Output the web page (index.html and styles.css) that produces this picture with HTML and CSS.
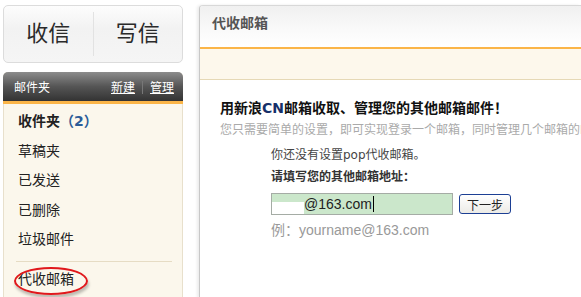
FILE: index.html
```html
<!DOCTYPE html>
<html lang="zh-CN">
<head>
    <meta charset="UTF-8">
    <title>代收邮箱</title>
    <link rel="stylesheet" href="styles.css">
</head>
<body>
    <div class="side">
        <div class="quick">
            <a class="quick-btn" href="#">收信</a>
            <a class="quick-btn" href="#">写信</a>
        </div>
        <div class="folders">
            <div class="folders-head">
                <span>邮件夹</span>
                <span class="ops"><a href="#">新建</a><i class="sep"></i><a href="#">管理</a></span>
            </div>
            <ul class="folder-list">
                <li class="bold">收件夹<span class="count">（2）</span></li>
                <li>草稿夹</li>
                <li>已发送</li>
                <li>已删除</li>
                <li>垃圾邮件</li>
            </ul>
            <div class="divider"></div>
            <ul class="folder-list">
                <li class="marked">代收邮箱</li>
            </ul>
        </div>
    </div>

    <div class="main">
        <div class="main-head">代收邮箱</div>
        <div class="main-bar"></div>
        <div class="main-body">
            <h2 class="title">用新浪<span class="cn">CN</span>邮箱收取、管理您的其他邮箱邮件！</h2>
            <p class="intro">您只需要简单的设置，即可实现登录一个邮箱，同时管理几个邮箱的邮件。</p>
            <div class="form">
                <p class="note">你还没有设置pop代收邮箱。</p>
                <p class="label">请填写您的其他邮箱地址：</p>
                <div class="row">
                    <div class="input"><span class="mask"></span>@163.com<span class="caret"></span></div>
                    <button class="button" type="button">下一步</button>
                </div>
                <p class="hint">例：yourname@163.com</p>
            </div>
        </div>
    </div>
</body>
</html>
```

FILE: styles.css
```css
body {
    margin: 0;
    font-family: "DejaVu Sans", "Noto Sans CJK SC", sans-serif;
    background: #fff;
    color: #333;
    display: flex;
    align-items: flex-start;
    overflow: hidden;
    height: 297px;
}
.side {
    flex: 0 0 180px;
    margin: 5px 0 0 3px;
}
.quick {
    height: 56px;
    display: flex;
    align-items: center;
    border: 1px solid #dcdcdc;
    border-radius: 5px;
    background: linear-gradient(to bottom, #fdfdfd, #f2f2f2 40%, #f5f5f5);
}
.quick-btn {
    flex: 1;
    text-align: center;
    font-size: 22px;
    color: #2a2a2a;
    text-decoration: none;
    line-height: 44px;
}
.quick-btn + .quick-btn {
    border-left: 1px solid #e2e2e2;
}
.folders {
    margin-top: 9px;
    height: 230px;
    background: #fbf7ec;
    border: 1px solid #e8e0cc;
    border-top: none;
    border-radius: 5px 5px 0 0;
}
.folders-head {
    height: 29px;
    display: flex;
    justify-content: space-between;
    align-items: center;
    padding: 0 9px 0 11px;
    font-size: 12px;
    color: #fff;
    border-radius: 5px 5px 0 0;
    background: linear-gradient(to bottom, #8c8c8c, #555 50%, #333);
    border-bottom: 3px solid #fbb548;
    margin: 0 -1px;
}
.ops a {
    color: #fff;
    text-decoration: underline;
}
.sep {
    display: inline-block;
    width: 1px;
    height: 13px;
    background: #777;
    margin: 0 7px;
    vertical-align: -2px;
}
.folder-list {
    list-style: none;
    margin: 0;
    padding: 3px 0 0 14px;
}
.folder-list li {
    font-size: 14px;
    line-height: 29.5px;
    color: #222;
}
.folder-list .bold {
    font-weight: bold;
}
.count {
    color: #2b5c98;
}
.divider {
    height: 1px;
    background: #e6dcc4;
    margin: 6px 10px 0 12px;
}
.folder-list .marked {
    position: relative;
    display: inline-block;
}
.marked::after {
    content: "";
    position: absolute;
    left: -4px;
    top: 2px;
    width: 70px;
    height: 24px;
    border: 2px solid #e0181c;
    border-radius: 50%;
    box-shadow: 1px 3px 3px rgba(0, 0, 0, 0.25);
}
.main {
    flex: 1;
    min-width: 0;
    overflow: hidden;
    margin: 5px 0 0 16px;
    height: 292px;
    border-left: 1px solid #c8c8c8;
    border-top: 1px solid #d8d8d8;
    border-radius: 4px 0 0 0;
    box-shadow: -2px 0 3px rgba(0, 0, 0, 0.08);
    background: #fff;
}
.main-head {
    height: 41px;
    line-height: 34px;
    padding-left: 12px;
    font-size: 14px;
    font-weight: bold;
    color: #555;
    background: linear-gradient(to bottom, #f0f0f0, #fafafa 60%, #fff);
    border-bottom: 2px solid #fbb548;
}
.main-bar {
    height: 30px;
    background: #fdf8ec;
    border-bottom: 1px solid #e6d9b6;
}
.main-body {
    padding: 18px 0 0 20px;
    white-space: nowrap;
}
.title {
    margin: 0;
    font-size: 14px;
    line-height: 20px;
    color: #111;
}
.cn {
    color: #16306a;
}
.intro {
    margin: 3px 0 0;
    font-size: 12px;
    line-height: 18px;
    color: #aaa;
}
.form {
    padding-left: 51px;
}
.note {
    margin: 7px 0 0;
    font-size: 12px;
    line-height: 18px;
    color: #444;
}
.label {
    margin: 4px 0 0;
    font-size: 12px;
    line-height: 18px;
    font-weight: bold;
    color: #333;
}
.row {
    display: flex;
    align-items: center;
    gap: 6px;
    margin-top: 7px;
}
.input {
    width: 180px;
    height: 20px;
    border: 1px solid #a5aca5;
    background: #cbe7cb;
    font-family: "Liberation Sans", sans-serif;
    font-size: 14px;
    line-height: 20px;
    color: #222;
    display: flex;
    align-items: center;
}
.mask {
    display: inline-block;
    width: 32px;
    height: 12px;
    margin-top: 8px;
    background: #fff;
}
.caret {
    display: inline-block;
    width: 1px;
    height: 16px;
    background: #000;
    margin-left: 1px;
}
.button {
    width: 52px;
    height: 20px;
    padding: 0;
    font-family: inherit;
    font-size: 12px;
    color: #222;
    background: linear-gradient(to bottom, #fff, #ecebe6);
    border: 1px solid #1c3f94;
    border-radius: 3px;
}
.hint {
    margin: 5px 0 0;
    font-family: "Liberation Sans", "Noto Sans CJK SC", sans-serif;
    font-size: 14px;
    line-height: 20px;
    color: #999;
}
```
